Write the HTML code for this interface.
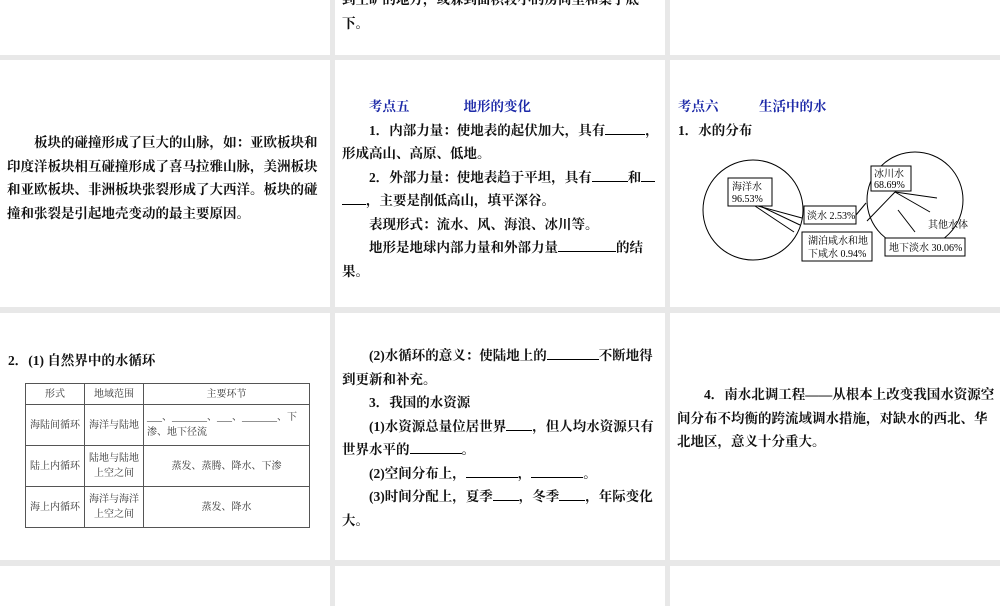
<!DOCTYPE html>
<html><head><meta charset="utf-8"><style>
body{margin:0;width:1000px;height:600px;background:#e8e8e8;position:relative;overflow:hidden;font-family:"Liberation Serif","Noto Serif CJK SC","Noto Sans CJK SC",serif;font-size:13.5px;color:#111}
.p{position:absolute;background:#fff;overflow:hidden}
.t{position:absolute;line-height:23.5px;font-weight:bold}
.in{text-indent:27px}
.b{color:#1d2aa8;font-weight:bold}
u{text-decoration:none;border-bottom:1px solid #000;display:inline-block;height:13px}
table{border-collapse:collapse;font-size:10px;font-weight:normal;color:#333;position:absolute}
td{border:1px solid #555;text-align:center;padding:0 3px;line-height:15px}
svg text{font-family:"Liberation Serif","Noto Serif CJK SC",serif;font-size:10px}
</style></head><body>
<div class="p" style="left:0;top:0;width:330px;height:55px"></div>
<div class="p" style="left:335;top:0;left:335px;width:330px;height:55px"><div class="t" style="left:7px;top:-12px;width:318px">到空旷的地方，或躲到面积较小的房间里和桌子底<br>下。</div></div>
<div class="p" style="left:670px;top:0;width:330px;height:55px"></div>

<div class="p" style="left:0;top:60px;width:330px;height:247px"><div class="t in" style="left:7px;top:71px;width:318px">板块的碰撞形成了巨大的山脉，如：亚欧板块和印度洋板块相互碰撞形成了喜马拉雅山脉，美洲板块和亚欧板块、非洲板块张裂形成了大西洋。板块的碰撞和张裂是引起地壳变动的最主要原因。</div></div>

<div class="p" style="left:335px;top:60px;width:330px;height:247px"><div class="t" style="left:7px;top:35px;width:318px">
<div class="in"><span class="b">考点五　　　　地形的变化</span></div>
<div class="in">1．内部力量：使地表的起伏加大，具有<u style="width:40px"></u>，形成高山、高原、低地。</div>
<div class="in">2．外部力量：使地表趋于平坦，具有<u style="width:36px"></u>和<u style="width:14px"></u><u style="width:24px"></u>，主要是削低高山，填平深谷。</div>
<div class="in">表现形式：流水、风、海浪、冰川等。</div>
<div class="in">地形是地球内部力量和外部力量<u style="width:58px"></u>的结果。</div>
</div></div>

<div class="p" style="left:670px;top:60px;width:330px;height:247px">
<div class="t" style="left:8px;top:35px"><span class="b">考点六　　　生活中的水</span><br>1．水的分布</div>
<svg width="330" height="247" style="position:absolute;left:0;top:0" fill="none" stroke="#000" stroke-width="1">
<circle cx="83" cy="150" r="50"/><circle cx="245" cy="140" r="48"/>
<rect x="58" y="118" width="44" height="28" fill="#fff"/>
<text x="62" y="130" fill="#000" stroke="none">海洋水</text><text x="62" y="142" fill="#000" stroke="none">96.53%</text>
<rect x="134" y="146" width="52" height="18" fill="#fff"/>
<text x="137" y="159" fill="#000" stroke="none">淡水 2.53%</text>
<rect x="201" y="106" width="40" height="25" fill="#fff"/>
<text x="204" y="117" fill="#000" stroke="none">冰川水</text><text x="204" y="128" fill="#000" stroke="none">68.69%</text>
<rect x="132" y="172" width="70" height="29" fill="#fff"/>
<text x="138" y="184" fill="#000" stroke="none">湖泊咸水和地</text><text x="138" y="197" fill="#000" stroke="none">下咸水 0.94%</text>
<rect x="215" y="178" width="80" height="18" fill="#fff"/>
<text x="219" y="191" fill="#000" stroke="none">地下淡水 30.06%</text>
<text x="258" y="168" fill="#000" stroke="none">其他水体</text>
<line x1="88" y1="146" x2="132" y2="158"/><line x1="90" y1="146" x2="130" y2="165"/><line x1="85" y1="146" x2="124" y2="172"/>
<line x1="186" y1="155" x2="196" y2="143"/>
<line x1="197" y1="161" x2="225" y2="132"/><line x1="225" y1="132" x2="267" y2="138"/><line x1="225" y1="132" x2="260" y2="152"/><line x1="228" y1="150" x2="245" y2="172"/>
</svg></div>

<div class="p" style="left:0;top:313px;width:330px;height:247px">
<div class="t" style="left:8px;top:36px">2．(1) 自然界中的水循环</div>
<table style="left:25px;top:70px;width:285px">
<tr style="height:21px"><td style="width:52px">形式</td><td style="width:52px">地域范围</td><td>主要环节</td></tr>
<tr style="height:41px"><td>海陆间循环</td><td>海洋与陆地</td><td style="text-align:left">___、_______、___、_______、下渗、地下径流</td></tr>
<tr style="height:41px"><td>陆上内循环</td><td>陆地与陆地上空之间</td><td>蒸发、蒸腾、降水、下渗</td></tr>
<tr style="height:41px"><td>海上内循环</td><td>海洋与海洋上空之间</td><td>蒸发、降水</td></tr>
</table></div>

<div class="p" style="left:335px;top:313px;width:330px;height:247px"><div class="t" style="left:7px;top:31px;width:318px">
<div class="in">(2)水循环的意义：使陆地上的<u style="width:52px"></u>不断地得到更新和补充。</div>
<div class="in">3．我国的水资源</div>
<div class="in">(1)水资源总量位居世界<u style="width:26px"></u>，但人均水资源只有世界水平的<u style="width:52px"></u>。</div>
<div class="in">(2)空间分布上，<u style="width:52px"></u>，<u style="width:52px"></u>。</div>
<div class="in">(3)时间分配上，夏季<u style="width:26px"></u>，冬季<u style="width:26px"></u>，年际变化大。</div>
</div></div>

<div class="p" style="left:670px;top:313px;width:330px;height:247px"><div class="t in" style="left:7px;top:70px;width:318px">4．南水北调工程——从根本上改变我国水资源空间分布不均衡的跨流域调水措施，对缺水的西北、华北地区，意义十分重大。</div></div>

<div class="p" style="left:0;top:566px;width:330px;height:40px"></div>
<div class="p" style="left:335px;top:566px;width:330px;height:40px"></div>
<div class="p" style="left:670px;top:566px;width:330px;height:40px"></div>
</body></html>
